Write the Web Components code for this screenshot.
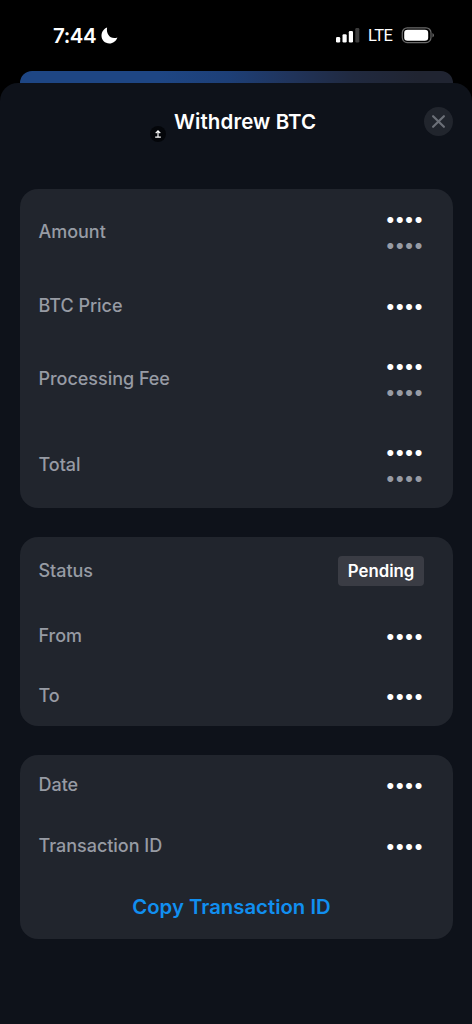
<!DOCTYPE html>
<html lang="en">
<head>
<meta charset="utf-8">
<title>Withdrew BTC</title>
<style>
html,body{margin:0;height:100%;background:#000}
body{font-family:Inter,"Liberation Sans",sans-serif;color:#fff;overflow:hidden}
</style>
</head>
<body>
<tx-screen>
  <status-bar slot="status" time="7:44" network="LTE"></status-bar>
  <sheet-header slot="header">Withdrew BTC</sheet-header>
  <detail-card>
    <detail-row label="Amount" style="height:86px"><masked-value></masked-value><masked-value muted></masked-value></detail-row>
    <detail-row label="BTC Price" style="height:61px"><masked-value></masked-value></detail-row>
    <detail-row label="Processing Fee" style="height:86px"><masked-value></masked-value><masked-value muted></masked-value></detail-row>
    <detail-row label="Total" style="height:85.5px"><masked-value></masked-value><masked-value muted></masked-value></detail-row>
  </detail-card>
  <detail-card>
    <detail-row label="Status" style="height:69px"><status-tag>Pending</status-tag></detail-row>
    <detail-row label="From" style="height:60px"><masked-value></masked-value></detail-row>
    <detail-row label="To" style="height:60px"><masked-value></masked-value></detail-row>
  </detail-card>
  <detail-card>
    <detail-row label="Date" style="height:61px"><masked-value></masked-value></detail-row>
    <detail-row label="Transaction ID" style="height:60px"><masked-value></masked-value></detail-row>
    <link-button>Copy Transaction ID</link-button>
  </detail-card>
</tx-screen>
<script>
const define = (name, html, setup) => {
  const tpl = document.createElement('template');
  tpl.innerHTML = html;
  customElements.define(name, class extends HTMLElement {
    constructor() {
      super();
      this.attachShadow({mode: 'open'}).append(tpl.content.cloneNode(true));
    }
    connectedCallback() { if (setup) setup(this, this.shadowRoot); }
  });
};

define('tx-screen', `
<style>
:host{display:flex;flex-direction:column;width:472px;height:1024px;background:#000}
.peek{height:12px;flex:none;margin:0 19.5px;border-radius:12px 12px 0 0;background:linear-gradient(90deg,#1e4684 0%,#1e4684 32%,#1d3f77 48%,#20345c 62%,#20293f 77%,#202431 92%)}
.sheet{flex:1;background:#0e121a;border-radius:18px 18px 0 0;display:flex;flex-direction:column}
.cards{display:flex;flex-direction:column;gap:29px;padding:0 19.5px}
</style>
<slot name="status"></slot>
<div class="peek"></div>
<div class="sheet"><slot name="header"></slot><div class="cards"><slot></slot></div></div>`);

define('status-bar', `
<style>
:host{display:flex;box-sizing:border-box;height:71px;flex:none;align-items:center;justify-content:space-between;padding:0 37px 0 53px}
div{display:flex;align-items:center}
.time{font-size:20.5px;font-weight:560;letter-spacing:-.4px;line-height:24px}
.net{font-family:Roboto,Inter,sans-serif;font-size:16.5px;font-weight:450;line-height:20px;margin:1px 8.5px 0 8px;letter-spacing:-.5px}
svg{display:block}
.moon{margin-left:4.5px}
</style>
<div><span class="time"></span>
<svg class="moon" width="17" height="17" viewBox="0 0 17 17"><path d="M6.1 .5C5 5.8 8.2 11.1 13.2 11.1c1.3 0 2.3-.2 3.2-.6-1.2 3.5-4.4 6-8 6C3.900 16.500 .5 13.200 .5 8.800 .5 5 2.700 1.900 6.100 .5Z" fill="#fff"/></svg></div>
<div>
<svg width="24" height="17" viewBox="0 0 24 17"><rect x="0" y="10" width="4.200" height="5.500" rx="1.200" fill="#fff"/><rect x="6.500" y="7.200" width="4.200" height="8.300" rx="1.200" fill="#fff"/><rect x="12.800" y="4" width="4.200" height="11.500" rx="1.200" fill="#fff"/><rect x="19.300" y="1" width="4" height="14.500" rx="1.200" fill="#3c3c3c"/></svg>
<span class="net"></span>
<svg width="34" height="17" viewBox="0 0 34 17"><rect x="1.300" y=".8" width="28.700" height="14.800" rx="5" fill="none" stroke="#6a6a6a" stroke-width="1.200"/><rect x="3.200" y="2.700" width="24" height="11" rx="3.300" fill="#fff"/><path d="M31.500 6v4.500c1.900-.8 1.900-3.700 0-4.500Z" fill="#777"/></svg>
</div>`, (h, r) => {
  r.querySelector('.time').textContent = h.getAttribute('time');
  r.querySelector('.net').textContent = h.getAttribute('network');
});

define('sheet-header', `
<style>
:host{display:grid;grid-template-columns:174px 1fr 29px;height:106px;flex:none;padding-right:19px;box-sizing:border-box;align-items:start}
.badge{justify-self:end;margin:43px 8px 0 0;display:block}
.title{font-size:20.5px;font-weight:600;line-height:24px;margin-top:26.5px;letter-spacing:.1px;white-space:nowrap}
.close{margin-top:24px;width:29px;height:29px;display:block}
</style>
<svg class="badge" width="16" height="16" viewBox="0 0 16 16"><circle cx="8" cy="8" r="8" fill="#04060a"/><path d="M8 10.800V5.200M5.700 7.200 8 4.900l2.300 2.300M5.200 11.200h5.600" fill="none" stroke="#fff" stroke-width="1.200"/></svg>
<div class="title"><slot></slot></div>
<svg class="close" viewBox="0 0 29 29"><circle cx="14.500" cy="14.500" r="14.500" fill="#21252d"/><path d="M9.100 9.200l10.800 10.600M19.900 9.200 9.100 19.800" stroke="#6c7078" stroke-width="2.200" stroke-linecap="round"/></svg>`);

define('detail-card', `
<style>:host{display:flex;flex-direction:column;background:#21252d;border-radius:18px}</style><slot></slot>`);

define('detail-row', `
<style>
:host{display:flex;align-items:center;justify-content:space-between;padding:0 28.500px 0 19px;box-sizing:border-box}
.label{font-size:18px;line-height:22px;font-weight:450;letter-spacing:-.03px;padding-top:.9px;color:#979ba4}
.values{display:flex;flex-direction:column;align-items:flex-end}
</style>
<span class="label"></span><div class="values"><slot></slot></div>`, (h, r) => {
  r.querySelector('.label').textContent = h.getAttribute('label');
});

define('masked-value', `
<style>
:host{display:block;font-size:19px;line-height:27.700px;height:25.700px;font-weight:600;color:#fff;letter-spacing:-.1px;padding-right:.7px}
:host([muted]){color:#979ba4}
</style>••••`);

define('status-tag', `
<style>
:host{display:block;background:#3a3c44;border-radius:4px;font-size:16.800px;font-weight:580;line-height:30px;height:30px;padding:0 9.700px}
</style><slot></slot>`);

define('link-button', `
<style>
:host{display:flex;height:63px;align-items:center;justify-content:center;padding-right:9px}
button{all:unset;font:600 20.300px/24px Inter,"Liberation Sans",sans-serif;letter-spacing:.03px;padding-top:.5px;color:#118ff0}
</style><button><slot></slot></button>`);
</script>
</body>
</html>
